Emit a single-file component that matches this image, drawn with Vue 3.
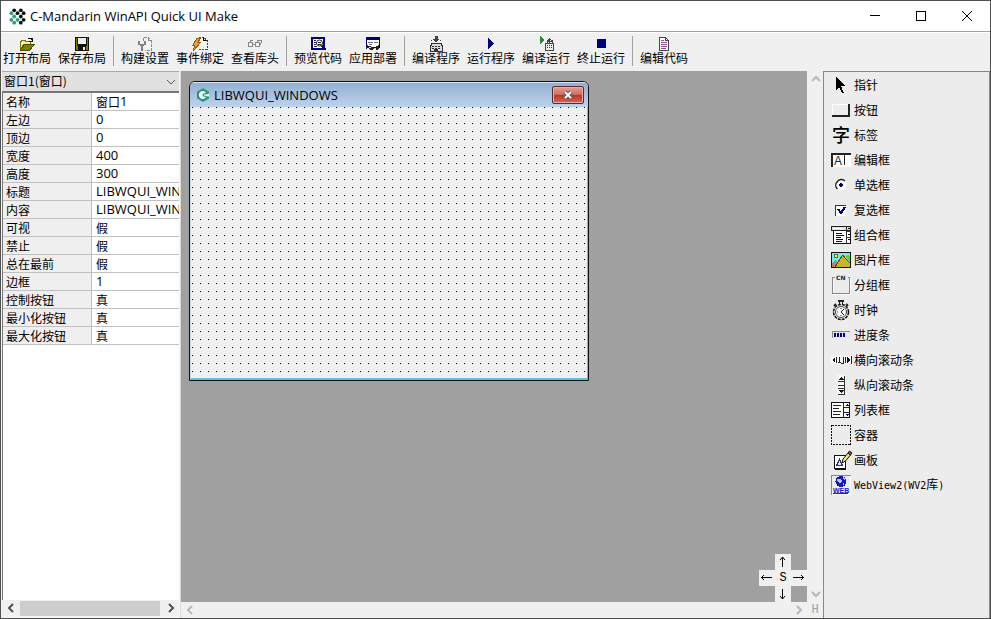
<script setup>
import { ref } from 'vue'

const toolGroups = [
  [
    { label: '打开布局', icon: '<path d="M1 5h1V4h4v1h5v3H5L1 14z" fill="#f5f58a" stroke="#777700"/><path d="M5.500 8.500H15L11 14H1.500z" fill="#808000" stroke="#4b4b00"/><path d="M9 2h3v1h1v1M13 2v3h-3" fill="none" stroke="#111"/>' },
    { label: '保存布局', icon: '<path d="M1 1h14v14H1z" fill="#111"/><path d="M2 2h1v8h10V2h1v12H2z" fill="#808000"/><path d="M4 2h8v6H4z" fill="#eee"/><path d="M4 10h8v5H4z" fill="#111"/><path d="M9 11h2v3H9z" fill="#eee"/>' },
  ],
  [
    { label: '构建设置', icon: '<path d="M6.500 5V1.500h5l3 3v10H8" fill="#f4f4f4" stroke="#888" stroke-dasharray="3 1"/><path d="M11.500 1v3.500H15" fill="none" stroke="#888"/><path d="M2 5v3l2 1h2l2-1V5M5 9v6" fill="none" stroke="#808080" stroke-width="2"/>' },
    { label: '事件绑定', icon: '<path d="M7 1.500h5l3 3v9H6" fill="#f4f4f4" stroke="#444" stroke-dasharray="2 1"/><path d="M11.500 1v3.500H15" fill="none" stroke="#111"/><path d="M5 2h4L6 6h3L1 15l2-6H1z" fill="#e9a52f" stroke="#9c5a12"/>' },
    { label: '查看库头', icon: '<path d="M1.500 6.500h4v4h-4zM8.500 6.500h4v4h-4zM6 8.500h3M3 6l1-2h2M10 6l1-2h3v3l-1 2" fill="none" stroke="#888"/>' },
  ],
  [
    { label: '预览代码', icon: '<path d="M2 2h12v11H2z" fill="#fff" stroke="#000080" stroke-width="2"/><path d="M4 4.500h2M4 6.500h2M4 8.500h2M4 10.500h3" stroke="#222"/><circle cx="9.500" cy="7" r="3" fill="#fff" stroke="#222" shape-rendering="auto"/><path d="M8 6.500h3M8 8.500h3" stroke="#222"/><path d="M12 10l4 4" stroke="#000080" stroke-width="2"/>' },
    { label: '应用部署', icon: '<path d="M1.500 2.500h13v9h-13z" fill="#fff" stroke="#000080"/><path d="M1 1h14v3H1z" fill="#000080"/><path d="M3 6.500h5M9 6.500h4M4 8.500h3" stroke="#777"/><path d="M1 9l3 1 3 1 2 1 2-2 3-1v3l-2 2-3-1-3 1-3-2-2 1z" fill="#222"/><path d="M4 11.500h2M9 12.500h2" stroke="#ddd"/>' },
  ],
  [
    { label: '编译程序', icon: '<path d="M3 7h10v2h1v6H2V9h1z" fill="#ddd" stroke="#333"/><path d="M7 0h2v3h2L8 6 5 3h2zM3 4h1M12 4h1" fill="#444" stroke="#444"/><path d="M4 10.500h8M4 12.500h8" stroke="#333" stroke-dasharray="2 1"/><path d="M6 13h4v2H6z" fill="#333"/>' },
    { label: '运行程序', icon: '<path d="M5 2l6 5.500L5 13z" fill="#000080"/>' },
    { label: '编译运行', icon: '<path d="M2 0l5 4-5 4z" fill="#2c8a35"/><path d="M7.500 7.500h8v7h-8z" fill="#eee" stroke="#444"/><path d="M9.500 7V5l2-2 3 2v2M11.500 4v3M10 5.500h4" fill="none" stroke="#444"/><path d="M9 9.500h6M9 11.500h6" stroke="#333" stroke-dasharray="1 1"/>' },
    { label: '终止运行', icon: '<path d="M4 3h9v9H4z" fill="#000080"/>' },
  ],
  [
    { label: '编辑代码', icon: '<path d="M3.500 1.500h6l3 3v10h-9z" fill="#fff" stroke="#444"/><path d="M9.500 1.500v3h3" fill="none" stroke="#444"/><path d="M5 4.500h3M5 6.500h6M5 8.500h6M5 10.500h6M5 12.500h5" stroke="#9a4a9a"/>' },
  ],
]

const windowTitle = 'LIBWQUI_WINDOWS'
const properties = [
  ['名称', '窗口1'], ['左边', '0'], ['顶边', '0'], ['宽度', '400'], ['高度', '300'],
  ['标题', windowTitle], ['内容', windowTitle], ['可视', '假'], ['禁止', '假'],
  ['总在最前', '假'], ['边框', '1'], ['控制按钮', '真'], ['最小化按钮', '真'], ['最大化按钮', '真'],
]

const form = { width: 400, height: 300 }
const target = ref('window1')

const palette = [
  { label: '指针', icon: '<path d="M5 1v14l3-3 3 6h2l-3-7h4z" fill="#000"/>' },
  { label: '按钮', icon: '<path d="M1 4h18v12H1z" fill="#ececec"/><path d="M1.500 15V4.500h16" fill="none" stroke="#fff"/><path d="M1 16h17V4" fill="none" stroke="#222" stroke-width="2"/>' },
  { label: '标签', icon: '<text x="1" y="17" font-size="18" font-weight="500" font-family="Noto Sans CJK SC, sans-serif" fill="#000">字</text>' },
  { label: '编辑框', shift: true, icon: '<path d="M0 3h20v14H0z" fill="#fff"/><path d="M1 17V3.500h19" fill="none" stroke="#222" stroke-width="2"/><text x="3" y="15" font-size="12" font-family="Liberation Sans, sans-serif" fill="#222">A</text><path d="M13.500 5v10" fill="none" stroke="#222"/>' },
  { label: '单选框', icon: '<g shape-rendering="auto"><circle cx="10" cy="10" r="5.500" fill="#fff"/><path d="M6.500 14a5 5 0 0 1-.5-7 5 5 0 0 1 8-1" fill="none" stroke="#222" stroke-width="1.500"/></g><path d="M9 8h2v1h1v2h-1v1H9v-1H8V9h1z" fill="#000080"/>' },
  { label: '复选框', icon: '<path d="M4 5h11v11H4z" fill="#fff"/><path d="M4.500 16V5.500H15" fill="none" stroke="#333"/><path d="M7 9l3 4 4-6" fill="none" stroke="#000080" stroke-width="2"/>' },
  { label: '组合框', icon: '<path d="M2.500 1.500h17v17h-17z" fill="#fff" stroke="#111"/><path d="M.5 1.500h19v4H.5z" fill="#ddd" stroke="#222"/><path d="M15.500 1v18M15 6.500h5M15 12.500h5" stroke="#333"/><path d="M2 3.500h11" stroke="#fff"/><path d="M5 8.500h6M5 10.500h8M5 12.500h5M5 14.500h7M5 16.500h6" stroke="#000080"/><path d="M17 3h2l-1 2zM17 10h2l-1-2zM17 14h2l-1 2z" fill="#111"/>' },
  { label: '图片框', icon: '<path d="M.5 2.500h19v15H.5z" fill="#78e8e8"/><path d="M1 13l4-3 4 7H1z" fill="#c47a70"/><path d="M4 17l5-8 3-4 3 4 4 4v4z" fill="#c6b52b" stroke="#57520a"/><path d="M14 7l3-2 2 2v5l-3-3z" fill="#5fd130"/><circle cx="5" cy="6" r="2" fill="#f6f058" stroke="#665"/><path d="M.5 2.500h19v15H.5z" fill="none" stroke="#111"/>' },
  { label: '分组框', icon: '<path d="M4 2.500H1.500v16h17v-16H17" fill="none" stroke="#888"/><path d="M2.500 17V3.500M2 19.500h17.500V3" fill="none" stroke="#fff"/><text x="5" y="5" font-size="6" font-weight="bold" font-family="DejaVu Sans, sans-serif" fill="#222">CN</text>' },
  { label: '时钟', icon: '<g shape-rendering="auto"><circle cx="10" cy="12" r="7.500" fill="#eee" stroke="#111" stroke-width="1.500" stroke-dasharray="3 1"/><circle cx="10" cy="12" r="5.500" fill="#fff" stroke="#444"/><path d="M13 9l-3 3 3 3M10 8v1M6 12h1M10 16v-1" fill="none" stroke="#111"/><path d="M3 6l2-2M17 6l-2-2" stroke="#222" stroke-width="2"/></g><path d="M7 0h6v2H7zM8 2h1v3H8zM11 2h1v3h-1z" fill="#222"/>' },
  { label: '进度条', icon: '<path d="M1 6h18v7H1z" fill="#e8e8e8"/><path d="M1.500 13V6.500H19" fill="none" stroke="#888"/><path d="M3 8h2v4H3zM6 8h2v4H6zM9 8h2v4H9zM12 8h2v4h-2z" fill="#000080"/>' },
  { label: '横向滚动条', icon: '<path d="M0 6h21v8H0z" fill="#f6f6f6"/><path d="M4 7v6l-3-3zM16 7v6l3-3z" fill="#111"/><path d="M5.500 7v6M7 12.500h3M8.500 7v6M12.500 7v6H10M14.500 7v6M20.500 6v8" fill="none" stroke="#222"/>' },
  { label: '纵向滚动条', icon: '<path d="M6 0h8v20H6z" fill="#f6f6f6"/><path d="M7 5h6l-3-3zM7 15h6l-3 3z" fill="#111"/><path d="M7 6.500h7M7 10.500h7M7 13.500h7M7 19.500h7M13.500 1v18" fill="none" stroke="#333"/>' },
  { label: '列表框', icon: '<path d="M.5 2.500h18v15H.5z" fill="#fff" stroke="#111"/><path d="M12.500 2v15M13 7.500h5M13 12.500h5" stroke="#222"/><path d="M2 5.500h8M2 8.500h6M2 11.500h8M2 14.500h7" stroke="#222"/><path d="M14 6h4l-2-2zM14 14h4l-2 2z" fill="#000080"/>' },
  { label: '容器', icon: '<path d="M.5 .5h19v19H.5z" fill="none" stroke="#111" stroke-dasharray="2 1"/>' },
  { label: '画板', icon: '<path d="M3.500 5.500h11v13h-11z" fill="#fff" stroke="#111"/><path d="M4 18.500h11" stroke="#111" stroke-width="2"/><path d="M5.500 15.500l3-6 3 6z" fill="#dde8ff" stroke="#333366"/><g shape-rendering="auto"><path d="M11 13l1-4 5-6 2.500 2-5 6z" fill="#eee28a" stroke="#111"/><path d="M17 3l1.500-2L21 3l-1.500 2z" fill="#b04050" stroke="#111"/></g>' },
  { label: 'WebView2(WV2库)', icon: '<path d="M.5 20V.5H20" fill="none" stroke="#888"/><path d="M19.500 1v18.500H1" fill="none" stroke="#fff"/><circle cx="10" cy="6.500" r="5.500" fill="#1818b8"/><path d="M6 4h3l2 2-1 2H8L6 6zM12 2l2 2-1 2zM11 9l2-1v2z" fill="#a9cbe8"/><text x="2" y="18" font-size="7" font-weight="bold" font-family="Liberation Sans, sans-serif" fill="#1a1ad8">WEB</text><path d="M2 18.500h15" stroke="#1a1ad8"/>' },
]

// Latin runs use a half-width face, Han runs a full-width one.
const runs = (text) => text.match(/[\x20-\x7e]+|[^\x20-\x7e]+/g).map((t) => ({ t, half: /^[\x20-\x7e]/.test(t) }))
</script>

<template>
  <div class="app">
    <header class="titlebar">
      <svg class="logo" viewBox="0 0 18 18" aria-hidden="true">
        <g fill="#111"><circle cx="5.500" cy="2.500" r="2" /><circle cx="12.500" cy="2.500" r="2" /><circle cx="9" cy="5.500" r="2" /><circle cx="15.500" cy="5.500" r="2" /><circle cx="12.500" cy="9" r="2" /><circle cx="15.500" cy="12.500" r="2" /><circle cx="12.500" cy="15.500" r="2" /></g>
        <g fill="#2f9b7c"><circle cx="2.500" cy="5.500" r="2" /><circle cx="5.500" cy="9" r="2" /><circle cx="2.500" cy="12.500" r="2" /><circle cx="9" cy="12.500" r="2" /><circle cx="5.500" cy="15.500" r="2" /></g>
      </svg>
      <h1>C-Mandarin WinAPI Quick UI Make</h1>
      <div class="caption">
        <button type="button" aria-label="最小化"><svg viewBox="0 0 12 12"><path d="M1 5.500h10" /></svg></button>
        <button type="button" aria-label="最大化"><svg viewBox="0 0 12 12"><path d="M1.500 1.500h9v9h-9z" /></svg></button>
        <button type="button" aria-label="关闭"><svg class="smooth" viewBox="0 0 12 12"><path d="M1 1l10 10M11 1L1 11" /></svg></button>
      </div>
    </header>

    <nav class="toolbar">
      <div v-for="(group, i) in toolGroups" :key="i" class="group">
        <button v-for="tool in group" :key="tool.label" type="button">
          <svg viewBox="0 0 16 16" v-html="tool.icon"></svg>
          <span>{{ tool.label }}</span>
        </button>
      </div>
    </nav>

    <main class="workspace">
      <aside class="inspector">
        <div class="picker">
          <select v-model="target" aria-label="对象">
            <option value="window1">窗口1(窗口)</option>
          </select>
          <svg viewBox="0 0 10 6"><path d="M1 1l4 4 4-4" /></svg>
        </div>
        <div class="grid">
          <table>
            <tbody>
              <tr v-for="[name, value] in properties" :key="name">
                <th scope="row">{{ name }}</th>
                <td><span v-for="r in runs(value)" :key="r.t" :class="{ latin: r.half }">{{ r.t }}</span></td>
              </tr>
            </tbody>
          </table>
        </div>
        <div class="scroll-x dark">
          <button type="button" aria-label="向左"><svg viewBox="0 0 6 10"><path d="M5 1L1 5l4 4" /></svg></button>
          <div class="thumb"></div>
          <button type="button" aria-label="向右"><svg viewBox="0 0 6 10"><path d="M1 1l4 4-4 4" /></svg></button>
        </div>
      </aside>

      <section class="stage">
        <div class="canvas">
          <div class="form" :style="{ width: form.width + 'px', height: form.height + 'px' }">
            <div class="form-title">
              <svg class="form-logo" viewBox="0 0 14 14" aria-hidden="true">
                <path d="M7 0l6 3.500v7L7 14l-6-3.500v-7z" fill="#e9f7f3" />
                <path d="M7 0l6 3.500v2L8 8l5 .500v2L7 14l-6-3.500v-7z" fill="#1f9a80" />
                <path d="M10 4.500A4 4 0 1 0 10 9.500L8 8.500A1.500 1.500 0 1 1 8 5.500z" fill="#fff" />
                <path d="M8 7h5" stroke="#fff" />
              </svg>
              <span>{{ windowTitle }}</span>
              <button type="button" aria-label="关闭窗口">
                <svg viewBox="0 0 12 10"><path d="M3 2l6 6M9 2L3 8" stroke="#555" stroke-width="4" /><path d="M3 2l6 6M9 2L3 8" stroke="#fff" stroke-width="2" /></svg>
              </button>
            </div>
            <div class="form-body"></div>
          </div>
          <div class="pad">
            <button type="button" class="up" aria-label="上移"><svg viewBox="0 0 12 12"><path d="M5.500 1v10M3 4l2.500-3L8 4" /></svg></button>
            <button type="button" class="left" aria-label="左移"><svg viewBox="0 0 12 12"><path d="M0 5.500h11M3 3L.5 5.500 3 8" /></svg></button>
            <button type="button" class="mid">S</button>
            <button type="button" class="right" aria-label="右移"><svg viewBox="0 0 12 12"><path d="M0 5.500h11M8 3l2.500 2.500L8 8" /></svg></button>
            <button type="button" class="down" aria-label="下移"><svg viewBox="0 0 12 12"><path d="M5.500 1v10M3 8l2.500 3L8 8" /></svg></button>
          </div>
        </div>
        <div class="scroll-y">
          <button type="button" aria-label="向上滚动"><svg viewBox="0 0 10 6"><path d="M1 5l4-4 4 4" /></svg></button>
          <button type="button" aria-label="向下滚动"><svg viewBox="0 0 10 6"><path d="M1 1l4 4 4-4" /></svg></button>
        </div>
        <div class="scroll-x">
          <button type="button" aria-label="向左滚动"><svg viewBox="0 0 6 10"><path d="M5 1L1 5l4 4" /></svg></button>
          <button type="button" aria-label="向右滚动"><svg viewBox="0 0 6 10"><path d="M1 1l4 4-4 4" /></svg></button>
        </div>
        <button type="button" class="corner">H</button>
      </section>

      <aside class="palette">
        <ul>
          <li v-for="item in palette" :key="item.label">
            <button type="button">
              <svg viewBox="0 0 20 20" v-html="item.icon"></svg>
              <span><span v-for="r in runs(item.label)" :key="r.t" :class="{ half: r.half }">{{ r.t }}</span></span>
            </button>
          </li>
        </ul>
      </aside>
    </main>
  </div>
</template>

<style>
body {
  background: #f0f0f0;
}
</style>

<style scoped>
* {
  box-sizing: border-box;
}
.app {
  display: flex;
  flex-direction: column;
  min-height: 100vh;
  border: 1px solid #505050;
  background: #f0f0f0;
  color: #000;
  font: 12px/14px "Noto Sans CJK SC", sans-serif;
}
button {
  padding: 0;
  border: 0;
  background: none;
  color: inherit;
  font: inherit;
}
svg {
  display: block;
  flex: none;
  fill: none;
  overflow: visible;
  shape-rendering: crispEdges;
}
.titlebar {
  display: flex;
  align-items: center;
  height: 31px;
  padding-left: 8px;
  border-bottom: 1px solid #a0a0a0;
  background: #fff;
}
.logo {
  width: 17px;
  height: 17px;
  margin-right: 4px;
  shape-rendering: auto;
}
h1 {
  flex: 1;
  margin: 0;
  font: 13px/16px "Open Sans", sans-serif;
}
.caption {
  display: flex;
}
.caption button {
  display: grid;
  place-items: center;
  width: 46px;
  height: 30px;
}
.caption svg {
  width: 12px;
  height: 12px;
  stroke: #000;
}
.caption .smooth {
  shape-rendering: auto;
}
.toolbar {
  display: flex;
  align-items: flex-start;
  height: 39px;
  padding-top: 3px;
  border-top: 1px solid #fff;
}
.group {
  display: flex;
}
.group + .group {
  padding-left: 5px;
  margin-left: 2px;
  border-left: 1px solid #a0a0a0;
}
.group button {
  display: flex;
  flex-direction: column;
  align-items: center;
  width: 55px;
  height: 30px;
  padding-right: 3px;
  line-height: 12px;
  white-space: nowrap;
}
.group svg {
  width: 16px;
  height: 16px;
}
.workspace {
  display: grid;
  flex: 1;
  grid-template-columns: 180px 1fr 167px;
}
.inspector {
  display: flex;
  flex-direction: column;
  padding: 0 1px 2px;
  border-right: 1px solid #dcdcdc;
  background: #f5f5f5;
}
.picker {
  display: flex;
  align-items: center;
  height: 20px;
  padding-right: 3px;
  border-top: 1px solid #a8a8a8;
  background: #e1e1e1;
}
select {
  flex: 1;
  height: 18px;
  padding: 0 2px 2px;
  border: 0;
  appearance: none;
  background: none;
  color: #000;
  font: 12px/16px "Noto Sans CJK SC", sans-serif;
}
.picker svg {
  width: 10px;
  height: 6px;
  stroke: #555;
  shape-rendering: auto;
}
.grid {
  flex: 1;
  border-top: 2px solid #777;
  border-left: 1px solid #777;
  background: #fff;
}
table {
  width: 100%;
  border-spacing: 0;
  table-layout: fixed;
}
th,
td {
  height: 18px;
  padding: 0 0 0 4px;
  border-bottom: 1px solid #c0c0c0;
  overflow: hidden;
  font: 12px/17px "Noto Sans CJK SC", sans-serif;
  text-align: left;
  white-space: nowrap;
}
td span {
  display: inline-block;
  height: 17px;
  vertical-align: top;
}
.latin {
  font: 13px/17px "Open Sans", sans-serif;
}
th {
  width: 89px;
  padding-left: 3px;
  border-right: 1px solid #c0c0c0;
  background: #efefef;
}
.scroll-x {
  display: flex;
  align-items: center;
  justify-content: space-between;
  height: 16px;
  background: #f0f0f0;
}
.scroll-x button,
.scroll-y button {
  display: grid;
  place-items: center;
  width: 17px;
  height: 16px;
}
.scroll-x svg {
  width: 6px;
  height: 10px;
}
.scroll-y svg {
  width: 10px;
  height: 6px;
}
.scroll-x svg,
.scroll-y svg {
  stroke: #b8b8b8;
  stroke-width: 2;
  shape-rendering: auto;
}
.dark svg {
  stroke: #505050;
}
.dark .thumb {
  flex: 1;
  height: 15px;
  margin: 0 2px 0 1px;
  background: #cdcdcd;
}
.stage {
  display: grid;
  grid-template: 1fr 16px / 1fr 16px;
}
.canvas {
  position: relative;
  padding: 10px 8px;
  background: #a0a0a0;
}
.form {
  display: flex;
  flex-direction: column;
  border: 1px solid #111;
  border-radius: 6px 6px 0 0;
  background: #f0f0f0;
  overflow: hidden;
}
.form-title {
  display: flex;
  align-items: center;
  gap: 4px;
  height: 25px;
  padding: 0 4px 0 6px;
  border-top: 1px solid #d5e5f5;
  background: linear-gradient(#93b0d3, #bdd3eb);
  font: 13px/16px "Open Sans", sans-serif;
}
.form-title span {
  flex: 1;
}
.form-logo {
  width: 14px;
  height: 14px;
  shape-rendering: auto;
}
.form-title button {
  display: grid;
  place-items: center;
  width: 32px;
  height: 18px;
  border: 1px solid #5b2b2b;
  border-radius: 2px;
  background: linear-gradient(#e3a298, #cf6a5c 48%, #b8362a 52%, #d4685a);
  box-shadow: inset 0 0 0 1px #e6b0a8;
}
.form-title button svg {
  width: 12px;
  height: 10px;
  shape-rendering: auto;
}
.form-body {
  flex: 1;
  border: solid #5fc3dc;
  border-width: 0 1px 2px 0;
  border-left: 1px solid #c8dcea;
  background: conic-gradient(at 1px 1px, transparent 75%, #000 0) 1px 0 / 8px 8px;
}
.pad {
  position: absolute;
  right: 0;
  bottom: 0;
  display: grid;
  grid-template: repeat(3, 16px) / repeat(3, 16px);
  grid-template-areas: ". up ." "left mid right" ". down .";
}
.pad button {
  display: grid;
  place-items: center;
  background: #f0f0f0;
  font: 12px/16px "Liberation Mono", monospace;
}
.pad svg {
  width: 12px;
  height: 12px;
  stroke: #000;
  shape-rendering: auto;
}
.up {
  grid-area: up;
}
.left {
  grid-area: left;
}
.mid {
  grid-area: mid;
}
.right {
  grid-area: right;
}
.down {
  grid-area: down;
}
.scroll-y {
  display: flex;
  flex-direction: column;
  justify-content: space-between;
}
.corner {
  color: #a0a0a0;
  font: 12px/16px "Liberation Mono", monospace;
}
.palette {
  border: 1px solid #888;
  border-bottom: 0;
  background: #ececec;
}
ul {
  margin: 0;
  padding: 0 0 0 7px;
  list-style: none;
}
li button {
  display: flex;
  align-items: center;
  gap: 3px;
  height: 25px;
}
li svg {
  width: 20px;
  height: 20px;
}
.half {
  font: 10px/14px "DejaVu Sans Mono", monospace;
}
</style>
